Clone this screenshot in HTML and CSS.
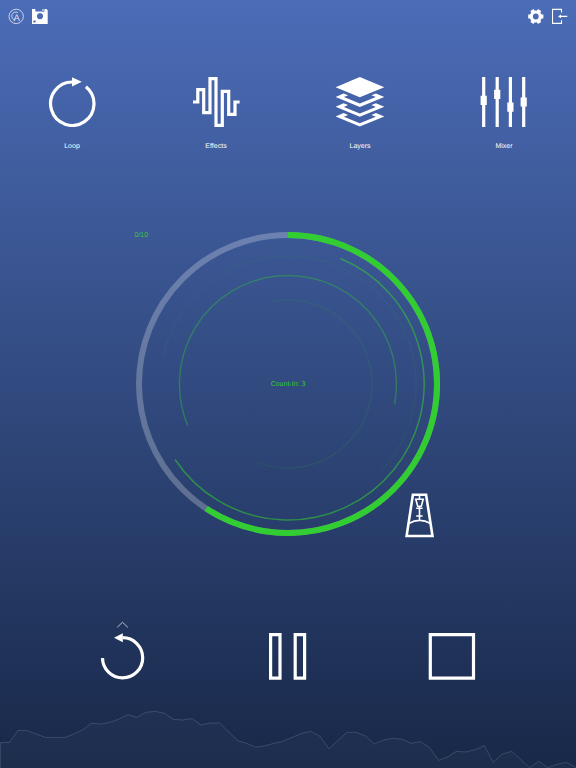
FILE: index.html
```html
<!DOCTYPE html>
<html>
    <head>
        <meta charset="utf-8">
        <meta name="viewport" content="width=device-width, initial-scale=1.0, user-scalable=no">
        <title>Loop</title>
        <link rel="stylesheet" href="styles.css">
    </head>
    <body>
        <div class="topbar">
            <div class="group">
                <svg class="icon" width="16" height="16" viewBox="0 0 16 16">
                    <circle class="hairline" cx="8.2" cy="8.4" r="7.2" />
                    <path class="hairline" d="M9.8 4.6A4 4 0 1 0 7.2 12" />
                    <text class="monogram" x="5.4" y="12.6">A</text>
                </svg>
                <svg class="icon" width="16" height="16" viewBox="0 0 16 16">
                    <path class="solid" fill-rule="evenodd" d="M0 1h3.4v2.4h6.8V3.8h2.2V1h2l1.3 1.3V16H0zM10.3 1.2v1.6h1.3V1.2zM8 5a3.1 3.1 0 1 0 .01 0zM1.4 12.4v2.2h2.2v-2.2z" />
                </svg>
            </div>
            <div class="group">
                <svg class="icon" width="16" height="16" viewBox="0 0 16 16">
                    <circle class="gear" cx="7.8" cy="8.5" r="4.5" />
                    <path class="teeth" d="M12.8 8.5h2.6M.2 8.5h2.6M10.3 4.2l1.3-2.2M5.3 4.2L4 2M10.3 12.8l1.3 2.2M5.3 12.8L4 15" />
                </svg>
                <svg class="icon" width="16" height="16" viewBox="0 0 16 16">
                    <path class="thin" d="M9.5 4.5V1.4h-9v14h9v-3.1M15.3 8.4H8" />
                    <path class="solid" d="M6 8.4l3-1.8v3.6z" />
                </svg>
            </div>
        </div>

        <div class="menu">
            <a class="item">
                <svg width="50" height="50" viewBox="0 0 50 50">
                    <path class="line" d="M38.9 9.8A21.7 21.7 0 1 1 25.3 5" />
                    <path class="solid" d="M25 .2L34.8 4.8 25 9.6z" />
                </svg>
                <span class="label">Loop</span>
            </a>
            <a class="item">
                <svg width="50" height="50" viewBox="0 0 50 50">
                    <path class="line" d="M2 25h4.8V12.7h5.9v23H19v-34h6v46.6h6.3v-34h6.4v23H44V25h4.6" />
                </svg>
                <span class="label">Effects</span>
            </a>
            <a class="item">
                <svg width="50" height="50" viewBox="0 0 50 50">
                    <path class="solid" d="M24.8 0L49.3 10.3 24.8 20.3.6 10.3z" />
                    <path class="solid" d="M8.6 16.4L.6 20l24.2 10 24.5-10-8.4-3.6-4.5 1.9 4.4 1.8-16 6.5L8.9 20.1l4.2-1.8z" />
                    <path class="solid" d="M8.6 26.2l-8 3.6 24.2 10 24.5-10-8.4-3.6-4.5 1.9 4.4 1.8-16 6.5-15.9-6.5 4.2-1.8z" />
                    <path class="solid" d="M8.6 36l-8 3.6 24.2 10 24.5-10-8.4-3.6-4.5 1.9 4.4 1.8-16 6.5-15.9-6.5 4.2-1.8z" />
                </svg>
                <span class="label">Layers</span>
            </a>
            <a class="item">
                <svg width="50" height="50" viewBox="0 0 50 50">
                    <path class="line" d="M4.7 0v50M18.2 0v50M31.4 0v50M44.7 0v50" />
                    <path class="knobs" d="M4.7 18.8v9.2M18.2 12.8v9.2M31.4 25.6v9.2M44.7 20.4v9.2" />
                </svg>
                <span class="label">Mixer</span>
            </a>
        </div>

        <!-- loop progress, centred on 0,0 -->
        <div class="stage">
            <svg class="dial" width="304" height="304" viewBox="-152 -152 304 304">
                <circle class="track" r="149" />
                <path class="progress" d="M0-149A149 149 0 1 1-81.8 124.5" />
                <path class="arc arc-1" d="M52.5-125.5A136 136 0 1 1-113 75.5" />
                <path class="arc arc-2" d="M-125.3-26A128 128 0 1 1 92 89" />
                <path class="arc arc-3" d="M-100.3 41.5A108.5 108.5 0 1 1 106.5 20.5" />
                <path class="arc arc-4" d="M-16-82.5A84 84 0 1 1-32 77.6" />
            </svg>
            <span class="count">0/10</span>
            <span class="countin">Count-In: 3</span>
            <svg class="metronome" width="30" height="45" viewBox="0 0 30 45">
                <path class="case" d="M7.9 1.7h13.2l6.4 41.3H1.6z" />
                <path class="detail" d="M3.8 30.5Q14.5 24.3 25.6 30.5M14.5 2v4M14.5 13.3V27M11.2 15.3h6.4M11.2 23h6.4M10.8 6.2h7.4l-1.9 7h-3.6z" />
            </svg>
        </div>

        <div class="transport">
            <svg width="49" height="60" viewBox="0 0 49 60">
                <path class="caret" d="M19.2 7.3l5.3-5 5.3 5" />
                <path class="line" d="M4.5 38A20.1 20.1 0 1 0 24.6 17.7" />
                <path class="solid" d="M24.8 13.2L16 17.8l8.8 4.5z" />
            </svg>
            <svg width="49" height="60" viewBox="0 0 49 60">
                <path class="line" d="M7.6 14.7h9.4v43.5H7.6zM32.2 14.7h9.4v43.5h-9.4z" />
            </svg>
            <svg width="49" height="60" viewBox="0 0 49 60">
                <path class="line" d="M2.3 14.6h43.2v43.6H2.3z" />
            </svg>
        </div>

        <svg class="wave" width="576" height="68" viewBox="0 0 576 68">
            <path d="M.6 70V42.5H9.3L18 30.4l9.3.3 18 6.7H65l9-3.4 8-3.7 9.3-7 9.7.7 9-1.7 8.3-3L128 14.7l9 2.6 9-5 9.3-1 9 2 9 6 9 .7 9.7-1.4L201 25l9-2h9.7l9.3 9.3 8.7 8.4 9 2.6 9.3 4 9-1.6 18.3-4.7L301 33.7l9.3-2.4 9.4 4.7L329 48.7l9-8.4 9-8h9.3l9.7 4 8.3 7.7 9.4-4 9-1.7 9.6 1 9 4 9-1.6 9 5.6 9.4 13 9-3.3 8.6-5.7 9.7.7 9-2.3 9.3-4 9 16.6 9-8.3 9.4-2.7 9 8 9 8.4 9-6.4L548 67.7l9-3.4 9-2 10 5V70z" />
        </svg>
    </body>
</html>
```
FILE: styles.css
```css
html {height: 100%;}
body {
    display: flex;
    flex-direction: column;
    height: 100%;
    margin: 0;
    overflow: hidden;
    font-family: "Liberation Sans", Helvetica, Arial, sans-serif;
    font-size: 7px;
    line-height: 10px;
    text-rendering: geometricPrecision;
    color: #fff;
    background: linear-gradient(#4b6cb7, #182848);
}
svg {display: block; flex: none;}

/* shared strokes */
.solid {fill: #fff;}
.line {fill: none; stroke: #fff; stroke-width: 3.2;}
.thin {fill: none; stroke: #fff; stroke-width: 1.1;}
.hairline {fill: none; stroke: #fff; stroke-width: .7;}

.topbar {
    display: flex;
    justify-content: space-between;
    height: 25px;
    padding: 8px 8px 0;
}
.group {display: flex; gap: 8px;}
.monogram {font-size: 9.5px; fill: #fff; fill-opacity: .8;}
.gear {fill: none; stroke: #fff; stroke-width: 3.2;}
.teeth {fill: none; stroke: #fff; stroke-width: 3.8;}

.menu {
    display: grid;
    grid-template-columns: repeat(4, 1fr);
    padding-top: 44px;
}
.item {
    display: flex;
    flex-direction: column;
    align-items: center;
    gap: 15px;
}
.knobs {fill: none; stroke: #fff; stroke-width: 6.2;}

.stage {
    position: relative;
    display: grid;
    place-items: center;
    width: 304px;
    height: 304px;
    margin: 80px auto 0;
    color: #32cd32;
}
.dial, .countin {grid-area: 1 / 1;}
.dial {fill: none;}
.track {stroke: #fff; stroke-opacity: .25; stroke-width: 6;}
.progress {stroke: #32cd32; stroke-width: 6;}
.arc {stroke: #32cd32; stroke-width: 1.5;}
.arc-1 {stroke-opacity: .55;}
.arc-2 {stroke-opacity: .07;}
.arc-3 {stroke-opacity: .36;}
.arc-4 {stroke-opacity: .1;}
.countin {padding-top: 2px;}
.count {position: absolute; left: -1.5px; top: -1px;}
.metronome {position: absolute; left: 269px; top: 261px;}
.case {fill: none; stroke: #fff; stroke-width: 2.6;}
.detail {fill: none; stroke: #fff; stroke-width: 1.6;}

.transport {
    display: grid;
    grid-template-columns: repeat(3, 165px);
    justify-items: center;
    padding: 84px 0 0 40px;
}
.caret {fill: none; stroke: #fff; stroke-width: .8; stroke-opacity: .85;}

.wave {
    margin-top: auto;
    fill: rgba(255, 255, 255, .025);
    stroke: rgba(255, 255, 255, .14);
    stroke-width: 1;
}
```
